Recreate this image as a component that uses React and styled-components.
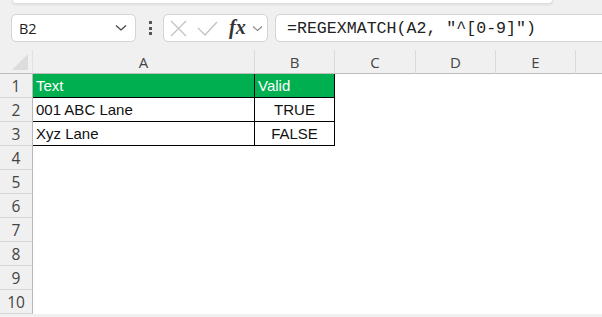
import React from "react";
import styled, { createGlobalStyle } from "styled-components";

const GlobalStyle = createGlobalStyle`
  html, body {
    margin: 0;
    padding: 0;
    background: #f0f0f0;
    overflow: hidden;
  }
`;

// F is only partly in view, its letter falls outside the window
const columns = [
  { name: "A", width: 222 },
  { name: "B", width: 80 },
  { name: "C", width: 81 },
  { name: "D", width: 80 },
  { name: "E", width: 80 },
  { name: "", width: 60 },
];

const data = [
  [{ text: "Text", head: true }, { text: "Valid", head: true }],
  [{ text: "001 ABC Lane" }, { text: "TRUE", center: true }],
  [{ text: "Xyz Lane" }, { text: "FALSE", center: true }],
];

const App = () => {
  return (
    <Page>
      <GlobalStyle />
      <RibbonEdge />
      <Toolbar>
        <NameBox>
          <span>B2</span>
          <svg width="12" height="8" viewBox="0 0 12 8">
            <path d="M1 1.5 L6 6 L11 1.5" fill="none" stroke="#444" strokeWidth="1.3" />
          </svg>
        </NameBox>
        <Dots>
          <i />
          <i />
          <i />
        </Dots>
        <FxBox>
          <svg width="17" height="17" viewBox="0 0 17 17">
            <path d="M1 1 L16 16 M16 1 L1 16" stroke="#c4c4c4" strokeWidth="1.4" />
          </svg>
          <svg width="21" height="15" viewBox="0 0 21 15">
            <path d="M1 7 L8 14 L20 1" fill="none" stroke="#c4c4c4" strokeWidth="1.4" />
          </svg>
          <Fx>fx</Fx>
          <svg width="11" height="7" viewBox="0 0 11 7">
            <path d="M1 1.5 L5.5 5.5 L10 1.5" fill="none" stroke="#888" strokeWidth="1.1" />
          </svg>
        </FxBox>
        <FormulaInput>=REGEXMATCH(A2, "^[0-9]")</FormulaInput>
      </Toolbar>
      <Grid>
        <Corner>
          <svg width="17" height="17" viewBox="0 0 17 17">
            <path d="M16 0 L16 16 L0 16 Z" fill="#dcdcdc" />
          </svg>
        </Corner>
        {columns.map((c, i) => (
          <ColHead key={i}>{c.name}</ColHead>
        ))}
        {Array.from({ length: 10 }).map((_, r) => (
          <React.Fragment key={r}>
            <RowHead>{r + 1}</RowHead>
            {columns.map((c, ci) => {
              const cell = data[r] && data[r][ci];
              const inTable = r < 3 && ci < 2;
              return (
                <Cell
                  key={ci}
                  $head={cell && cell.head}
                  $center={cell && cell.center}
                  $table={inTable}
                >
                  {cell ? cell.text : ""}
                </Cell>
              );
            })}
          </React.Fragment>
        ))}
      </Grid>
    </Page>
  );
};

const Page = styled.div`
  width: 602px;
  height: 317px;
  overflow: hidden;
  background: #f0f0f0;
  font-family: "Open Sans", "Liberation Sans", sans-serif;
`;

const RibbonEdge = styled.div`
  height: 3px;
  margin: 0 49px 0 12px;
  background: #fff;
  border: 1px solid #dedede;
  border-top: none;
  border-radius: 0 0 6px 6px;
  box-shadow: 0 1px 3px rgba(0, 0, 0, 0.08);
`;

const Toolbar = styled.div`
  display: flex;
  align-items: center;
  height: 28px;
  padding: 10px 0 0 11px;
  margin-bottom: 8px;
`;

const NameBox = styled.div`
  box-sizing: border-box;
  width: 125px;
  height: 28px;
  display: flex;
  align-items: center;
  justify-content: space-between;
  padding: 0 8px 0 7px;
  background: #fff;
  border: 1px solid #d4d4d4;
  border-radius: 5px;
  font-size: 14.5px;
  color: #222;
`;

const Dots = styled.div`
  display: flex;
  flex-direction: column;
  gap: 2.5px;
  margin: 0 11px 0 13px;
  i {
    display: block;
    width: 3px;
    height: 3px;
    background: #555;
  }
`;

const FxBox = styled.div`
  box-sizing: border-box;
  width: 105px;
  height: 28px;
  display: flex;
  align-items: center;
  gap: 10px;
  padding: 0 3px 0 6px;
  background: #fff;
  border: 1px solid #d4d4d4;
  border-radius: 5px;
  svg:last-child {
    margin-left: -4px;
  }
`;

const Fx = styled.span`
  font-family: "Liberation Serif", serif;
  font-style: italic;
  font-weight: bold;
  font-size: 20px;
  color: #333;
  line-height: 1;
  margin-left: 1px;
  margin-top: -2px;
`;

const FormulaInput = styled.div`
  box-sizing: border-box;
  flex: 1;
  height: 28px;
  margin-left: 7px;
  margin-right: -10px;
  display: flex;
  align-items: center;
  padding-left: 11px;
  background: #fff;
  border: 1px solid #d4d4d4;
  border-radius: 5px;
  font-family: "Liberation Mono", monospace;
  font-size: 16.6px;
  color: #222;
  white-space: pre;
`;

const Grid = styled.div`
  display: grid;
  grid-template-columns: 33px 222px 80px 81px 80px 80px 60px;
  grid-auto-rows: 24px;
  background: #fff;
`;

const Corner = styled.div`
  background: #f0f0f0;
  border-bottom: 1px solid #bdbdbd;
  border-right: 1px solid #e2e2e2;
  display: flex;
  align-items: flex-end;
  justify-content: flex-end;
  padding: 0 3px 2px 0;
`;

const ColHead = styled.div`
  background: #f0f0f0;
  border-bottom: 1px solid #bdbdbd;
  border-right: 1px solid #dadada;
  display: flex;
  align-items: center;
  justify-content: center;
  font-size: 15px;
  color: #444;
  padding-top: 1px;
  box-sizing: border-box;
`;

const RowHead = styled.div`
  background: #f0f0f0;
  border-right: 1px solid #b8b8b8;
  border-bottom: 1px solid #d8d8d8;
  display: flex;
  align-items: center;
  justify-content: center;
  font-size: 15.5px;
  color: #444;
  box-sizing: border-box;
`;

const Cell = styled.div`
  box-sizing: border-box;
  display: flex;
  align-items: flex-end;
  justify-content: ${(p) => (p.$center ? "center" : "flex-start")};
  padding: 0 3px 2px 3px;
  font-family: "Liberation Sans", Arial, sans-serif;
  font-size: 15px;
  line-height: 18px;
  color: ${(p) => (p.$head ? "#fff" : "#111")};
  background: ${(p) => (p.$head ? "#00b050" : "#fff")};
  border-bottom: ${(p) => (p.$table ? "1px solid #000" : "none")};
  border-right: ${(p) => (p.$table ? "1px solid #000" : "none")};
  white-space: nowrap;
`;

export default App;
